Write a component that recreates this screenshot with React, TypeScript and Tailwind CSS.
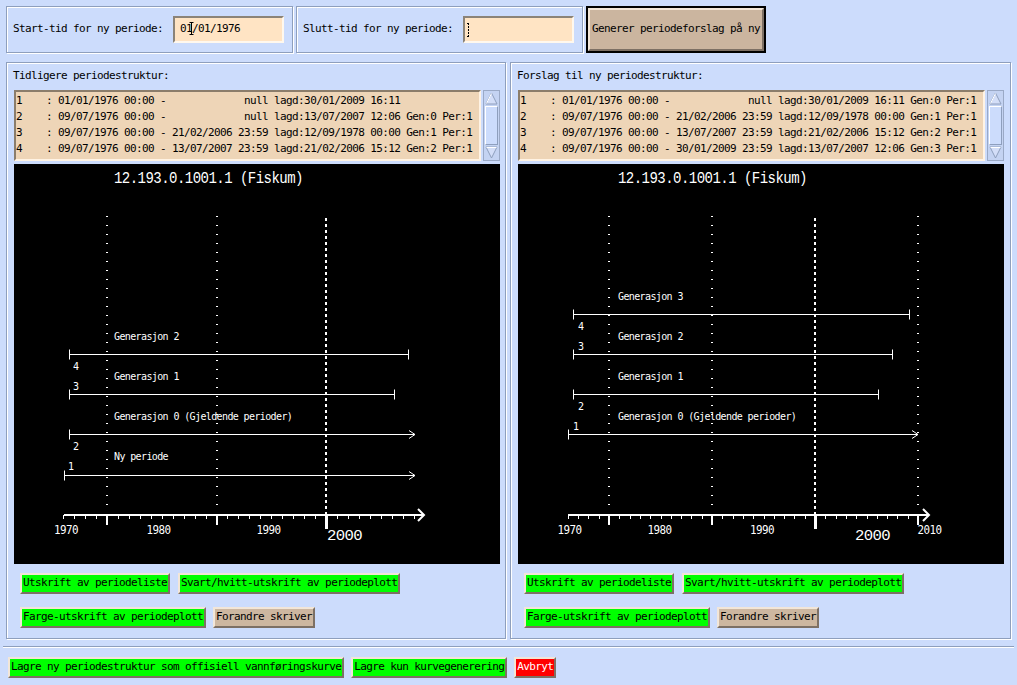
import React from "react";

type Bar = { y: number; x1: number; x2: number; arrow?: boolean };
type Txt = { x: number; y: number; t: string };
type PlotCfg = {
  thin: number[];
  thick: number;
  minorBase: number;
  minorStep: number;
  kFrom: number;
  kTo: number;
  axisEnd: number;
  years: { t: string; cx: number }[];
  big: number;
  bars: Bar[];
  texts: Txt[];
};

function Plot({ c }: { c: PlotCfg }) {
  const minors: number[] = [];
  for (let k = c.kFrom; k <= c.kTo; k++) minors.push(c.minorBase + k * c.minorStep);
  return (
    <svg width="486" height="400" viewBox="0 0 486 400" className="block">
      <text
        x="100"
        y="19"
        fill="#fff"
        fontSize="16"
        fontFamily="Liberation Mono, monospace"
        textLength="189"
        lengthAdjust="spacingAndGlyphs"
      >
        12.193.0.1001.1 (Fiskum)
      </text>
      {c.thin.map((x) => (
        <line key={x} x1={x} y1="52" x2={x} y2="342" stroke="#fff" strokeWidth="2" strokeDasharray="1 8" shapeRendering="crispEdges" />
      ))}
      <line x1={c.thick} y1="54" x2={c.thick} y2="350" stroke="#fff" strokeWidth="2" strokeDasharray="3 3" shapeRendering="crispEdges" />
      {/* axis */}
      <line x1="50" y1="351" x2={c.axisEnd} y2="351" stroke="#fff" strokeWidth="2" shapeRendering="crispEdges" />
      <polyline points={`${c.axisEnd - 6},345 ${c.axisEnd},351 ${c.axisEnd - 6},357`} fill="none" stroke="#fff" strokeWidth="2" />
      {minors.map((x, i) => (
        <line key={i} x1={Math.round(x) + 0.5} y1="351" x2={Math.round(x) + 0.5} y2="355" stroke="#fff" strokeWidth="1" />
      ))}
      {c.thin.map((x) => (
        <line key={"m" + x} x1={x} y1="351" x2={x} y2="361" stroke="#fff" strokeWidth="2" shapeRendering="crispEdges" />
      ))}
      <line x1={c.thick} y1="351" x2={c.thick} y2="365" stroke="#fff" strokeWidth="3" shapeRendering="crispEdges" />
      {c.years.map((y) => (
        <text
          key={y.t}
          x={y.cx - 12}
          y="370"
          fill="#fff"
          fontSize="12"
          fontFamily="DejaVu Sans Mono, monospace"
          textLength="24"
          lengthAdjust="spacingAndGlyphs"
        >
          {y.t}
        </text>
      ))}
      <text
        x={c.big}
        y="375.5"
        fill="#fff"
        fontSize="15"
        fontFamily="Liberation Mono, monospace"
        textLength="35"
        lengthAdjust="spacingAndGlyphs"
      >
        2000
      </text>
      {c.bars.map((b, i) => (
        <g key={i} stroke="#fff" strokeWidth="1" fill="none">
          <line x1={b.x1} y1={b.y + 0.5} x2={b.x2} y2={b.y + 0.5} />
          <line x1={b.x1 + 0.5} y1={b.y - 4.5} x2={b.x1 + 0.5} y2={b.y + 5.5} />
          {b.arrow ? (
            <polyline points={`${b.x2 - 6},${b.y - 3.5} ${b.x2},${b.y + 0.5} ${b.x2 - 6},${b.y + 4.5}`} />
          ) : (
            <line x1={b.x2 + 0.5} y1={b.y - 4.5} x2={b.x2 + 0.5} y2={b.y + 5.5} />
          )}
        </g>
      ))}
      {c.texts.map((t, i) => (
        <text key={i} x={t.x} y={t.y} fill="#fff" fontSize="10" fontFamily="DejaVu Sans Mono, monospace" xmlSpace="preserve">
          {t.t}
        </text>
      ))}
    </svg>
  );
}

const leftPlot: PlotCfg = {
  thin: [93, 203],
  thick: 312,
  minorBase: 93,
  minorStep: 10.95,
  kFrom: -4,
  kTo: 28,
  axisEnd: 410,
  years: [
    { t: "1970", cx: 52 },
    { t: "1980", cx: 144.5 },
    { t: "1990", cx: 254.5 },
  ],
  big: 313,
  bars: [
    { y: 190, x1: 55, x2: 394 },
    { y: 230, x1: 55, x2: 380 },
    { y: 270, x1: 55, x2: 401, arrow: true },
    { y: 311, x1: 50, x2: 401, arrow: true },
  ],
  texts: [
    { x: 100, y: 175.5, t: "Generasjon 2" },
    { x: 59, y: 205.5, t: "4" },
    { x: 100, y: 215.5, t: "Generasjon 1" },
    { x: 59, y: 225.5, t: "3" },
    { x: 100, y: 255.5, t: "Generasjon 0 (Gjeldende perioder)" },
    { x: 59, y: 285.5, t: "2" },
    { x: 100, y: 295.5, t: "Ny periode" },
    { x: 54, y: 305.5, t: "1" },
  ],
};

const rightPlot: PlotCfg = {
  thin: [91, 194, 400],
  thick: 297,
  minorBase: 91,
  minorStep: 10.3,
  kFrom: -4,
  kTo: 30,
  axisEnd: 411,
  years: [
    { t: "1970", cx: 51.5 },
    { t: "1980", cx: 141.5 },
    { t: "1990", cx: 244 },
    { t: "2010", cx: 411.5 },
  ],
  big: 337,
  bars: [
    { y: 150, x1: 55, x2: 391 },
    { y: 190, x1: 55, x2: 374 },
    { y: 230, x1: 55, x2: 360 },
    { y: 270, x1: 50, x2: 400, arrow: true },
  ],
  texts: [
    { x: 100, y: 135.5, t: "Generasjon 3" },
    { x: 60, y: 165.5, t: "4" },
    { x: 100, y: 175.5, t: "Generasjon 2" },
    { x: 60, y: 185.5, t: "3" },
    { x: 100, y: 215.5, t: "Generasjon 1" },
    { x: 60, y: 245.5, t: "2" },
    { x: 100, y: 255.5, t: "Generasjon 0 (Gjeldende perioder)" },
    { x: 55, y: 265.5, t: "1" },
  ],
};

function Btn({ children, bg, fg }: { children: React.ReactNode; bg: string; fg?: string }) {
  return (
    <div
      className={`h-[21px] px-[1px] flex items-center whitespace-pre border-2 border-t-[#f2e6d8] border-l-[#f2e6d8] border-b-[#7d7064] border-r-[#7d7064] ${bg} ${fg ?? "text-black"}`}
    >
      {children}
    </div>
  );
}

function Scroll() {
  return (
    <div className="w-[17px] h-[71px] flex flex-col items-center bg-[#c4d3f2] border border-[#9aa9c6] py-[1px]">
      <svg width="13" height="13" viewBox="0 0 13 13" className="block">
        <polygon points="6.5,1 12,12 1,12" fill="#d3def8" stroke="#8e9fbd" strokeWidth="1" />
        <polyline points="1.5,11.5 6.5,1.5" fill="none" stroke="#ffffff" strokeWidth="1" />
      </svg>
      <div className="my-[1px] w-[13px] flex-1 bg-[#ccdcfc] border border-t-white border-l-white border-b-[#8e9fbd] border-r-[#8e9fbd]" />
      <svg width="13" height="13" viewBox="0 0 13 13" className="block">
        <polygon points="1,1 12,1 6.5,12" fill="#d3def8" stroke="#8e9fbd" strokeWidth="1" />
        <polyline points="1.5,1.5 11.5,1.5" fill="none" stroke="#ffffff" strokeWidth="1" />
      </svg>
    </div>
  );
}

function Panel({ title, rows, plot, width }: { title: string; rows: string[]; plot: PlotCfg; width: string }) {
  return (
    <div
      className={`${width} h-[577px] border border-[#8e9fbd] shadow-[inset_1px_1px_0_#ffffff,1px_1px_0_#ffffff] flex flex-col pl-[7px]`}
    >
      <div className="h-[27px] flex items-center -ml-px whitespace-pre">{title}</div>
      <div className="flex gap-[2px] h-[71px]">
        <div className="w-[467px] h-[71px] bg-[#eed5b7] border-2 border-t-[#8b7d6b] border-l-[#8b7d6b] border-b-[#fff3e4] border-r-[#fff3e4] pt-[1px] overflow-hidden">
          {rows.map((r, i) => (
            <div key={i} className="h-[16px] leading-[16px] whitespace-pre">
              {r}
            </div>
          ))}
        </div>
        <Scroll />
      </div>
      <div className="mt-[3px] w-[486px] h-[400px] bg-black">
        <Plot c={plot} />
      </div>
      <div className="mt-[9px] ml-[6px] flex gap-[8px]">
        <Btn bg="bg-[#00ff00]">Utskrift av periodeliste</Btn>
        <Btn bg="bg-[#00ff00]">Svart/hvitt-utskrift av periodeplott</Btn>
      </div>
      <div className="mt-[13px] ml-[6px] flex gap-[7px]">
        <Btn bg="bg-[#00ff00]">Farge-utskrift av periodeplott</Btn>
        <Btn bg="bg-[#cdb7a0]">Forandre skriver</Btn>
      </div>
    </div>
  );
}

const leftRows = [
  "1    : 01/01/1976 00:00 -             null lagd:30/01/2009 16:11",
  "2    : 09/07/1976 00:00 -             null lagd:13/07/2007 12:06 Gen:0 Per:1",
  "3    : 09/07/1976 00:00 - 21/02/2006 23:59 lagd:12/09/1978 00:00 Gen:1 Per:1",
  "4    : 09/07/1976 00:00 - 13/07/2007 23:59 lagd:21/02/2006 15:12 Gen:2 Per:1",
];
const rightRows = [
  "1    : 01/01/1976 00:00 -             null lagd:30/01/2009 16:11 Gen:0 Per:1",
  "2    : 09/07/1976 00:00 - 21/02/2006 23:59 lagd:12/09/1978 00:00 Gen:1 Per:1",
  "3    : 09/07/1976 00:00 - 13/07/2007 23:59 lagd:21/02/2006 15:12 Gen:2 Per:1",
  "4    : 09/07/1976 00:00 - 30/01/2009 23:59 lagd:13/07/2007 12:06 Gen:3 Per:1",
];

export default function App() {
  return (
    <div className="w-[1017px] h-[685px] overflow-hidden bg-[#ccdcfc] text-black font-['DejaVu_Sans_Mono',monospace] text-[11px] tracking-[-0.62px]">
      {/* top row */}
      <div className="flex items-start gap-[3px] pl-[6px] pt-[6px]">
        <div className="w-[287px] h-[47px] border border-[#8e9fbd] shadow-[inset_1px_1px_0_#ffffff,1px_1px_0_#ffffff] flex items-center pl-[6px]">
          <span className="whitespace-pre">Start-tid for ny periode:</span>
          <div className="relative ml-[10px] w-[111px] h-[27px] bg-[#ffe4c4] border-2 border-t-[#8b8378] border-l-[#8b8378] border-b-[#fff8ee] border-r-[#fff8ee] flex items-center pl-[5px]">
            01/01/1976
            <svg width="5" height="13" viewBox="0 0 5 13" className="absolute left-[14px] top-[4px]">
              <path d="M0.5 0.5h4M2.5 0.5v12M0.5 12.5h4" stroke="#000" strokeWidth="1" fill="none" />
            </svg>
          </div>
        </div>
        <div className="w-[287px] h-[47px] border border-[#8e9fbd] shadow-[inset_1px_1px_0_#ffffff,1px_1px_0_#ffffff] flex items-center pl-[6px]">
          <span className="whitespace-pre">Slutt-tid for ny periode:</span>
          <div className="relative ml-[10px] w-[111px] h-[27px] bg-[#ffe4c4] border-2 border-t-[#8b8378] border-l-[#8b8378] border-b-[#fff8ee] border-r-[#fff8ee]">
            <svg width="4" height="14" viewBox="0 0 4 14" className="absolute left-[2px] top-[5px]">
              <path d="M0 0.5h3M1.5 0v14M0 13.5h3" stroke="#000" strokeWidth="1" strokeDasharray="2 1" fill="none" />
            </svg>
          </div>
        </div>
        <div className="w-[180px] h-[47px] border-2 border-black">
          <div className="w-full h-full bg-[#cbb59f] border-2 border-t-[#f2e6d8] border-l-[#f2e6d8] border-b-[#7d7064] border-r-[#7d7064] flex items-center pl-[2px] whitespace-pre">
            Generer periodeforslag på ny
          </div>
        </div>
      </div>

      {/* panels */}
      <div className="mt-[9px] flex gap-[4px] pl-[6px]">
        <Panel title="Tidligere periodestruktur:" rows={leftRows} plot={leftPlot} width="w-[500px]" />
        <Panel title="Forslag til ny periodestruktur:" rows={rightRows} plot={rightPlot} width="w-[501px]" />
      </div>

      {/* separator */}
      <div className="mt-[7px] mx-[3px] h-[2px] border-t border-t-[#8e9fbd] border-b border-b-white" />

      {/* bottom buttons */}
      <div className="mt-[9px] pl-[8px] flex gap-[7px]">
        <Btn bg="bg-[#00ff00]">Lagre ny periodestruktur som offisiell vannføringskurve</Btn>
        <Btn bg="bg-[#00ff00]">Lagre kun kurvegenerering</Btn>
        <Btn bg="bg-[#ff0000]" fg="text-white">Avbryt</Btn>
      </div>
    </div>
  );
}
